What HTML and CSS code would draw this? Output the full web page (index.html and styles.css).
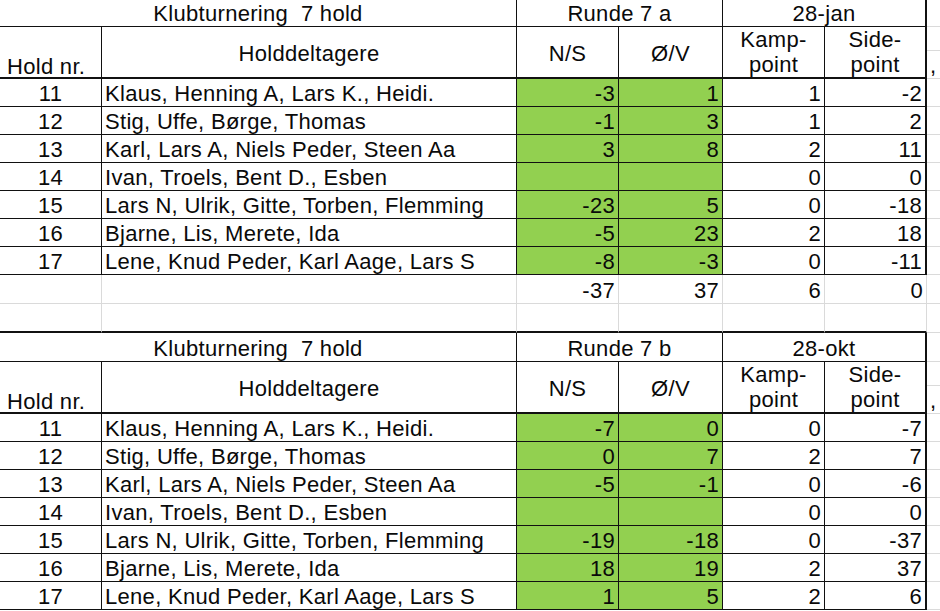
FILE: index.html
```html
<!DOCTYPE html>
<html lang="da">
<head>
<meta charset="utf-8">
<title>Klubturnering 7 hold</title>
<link rel="stylesheet" href="styles.css">
</head>
<body>
<div class="sheet">
  <!-- Table 1 -->
  <div class="row title top">
    <div class="c ctr span2">Klubturnering  7 hold</div>
    <div class="c ctr span2">Runde 7 a</div>
    <div class="c ctr span2 edge">28-jan</div>
    <div class="c out"></div>
  </div>
  <div class="row head">
    <div class="c hold">Hold nr.</div>
    <div class="c ctr mid">Holddeltagere</div>
    <div class="c ctr mid">N/S</div>
    <div class="c ctr mid">Ø/V</div>
    <div class="c ctr"><span class="two">Kamp-<br>point</span></div>
    <div class="c ctr edge"><span class="two">Side-<br>point</span></div>
    <div class="c out split">,</div>
  </div>
  <div class="row"><div class="c ctr">11</div><div class="c name">Klaus, Henning A, Lars K., Heidi.</div><div class="c num g">-3</div><div class="c num g">1</div><div class="c num">1</div><div class="c num edge">-2</div><div class="c out"></div></div>
  <div class="row"><div class="c ctr">12</div><div class="c name">Stig, Uffe, Børge, Thomas</div><div class="c num g">-1</div><div class="c num g">3</div><div class="c num">1</div><div class="c num edge">2</div><div class="c out"></div></div>
  <div class="row"><div class="c ctr">13</div><div class="c name">Karl, Lars A, Niels Peder, Steen Aa</div><div class="c num g">3</div><div class="c num g">8</div><div class="c num">2</div><div class="c num edge">11</div><div class="c out"></div></div>
  <div class="row"><div class="c ctr">14</div><div class="c name">Ivan, Troels, Bent D., Esben</div><div class="c num g"></div><div class="c num g"></div><div class="c num">0</div><div class="c num edge">0</div><div class="c out"></div></div>
  <div class="row"><div class="c ctr">15</div><div class="c name">Lars N, Ulrik, Gitte, Torben, Flemming</div><div class="c num g">-23</div><div class="c num g">5</div><div class="c num">0</div><div class="c num edge">-18</div><div class="c out"></div></div>
  <div class="row"><div class="c ctr">16</div><div class="c name">Bjarne, Lis, Merete, Ida</div><div class="c num g">-5</div><div class="c num g">23</div><div class="c num">2</div><div class="c num edge">18</div><div class="c out"></div></div>
  <div class="row"><div class="c ctr">17</div><div class="c name">Lene, Knud Peder, Karl Aage, Lars S</div><div class="c num g">-8</div><div class="c num g">-3</div><div class="c num">0</div><div class="c num edge">-11</div><div class="c out"></div></div>
  <div class="row soft sum"><div class="c"></div><div class="c"></div><div class="c num">-37</div><div class="c num">37</div><div class="c num">6</div><div class="c num">0</div><div class="c out"></div></div>
  <div class="row soft gap"><div class="c"></div><div class="c"></div><div class="c"></div><div class="c"></div><div class="c"></div><div class="c"></div><div class="c out"></div></div>

  <!-- Table 2 -->
  <div class="row title second">
    <div class="c ctr span2">Klubturnering  7 hold</div>
    <div class="c ctr span2">Runde 7 b</div>
    <div class="c ctr span2 edge">28-okt</div>
    <div class="c out"></div>
  </div>
  <div class="row head">
    <div class="c hold">Hold nr.</div>
    <div class="c ctr mid">Holddeltagere</div>
    <div class="c ctr mid">N/S</div>
    <div class="c ctr mid">Ø/V</div>
    <div class="c ctr"><span class="two">Kamp-<br>point</span></div>
    <div class="c ctr edge"><span class="two">Side-<br>point</span></div>
    <div class="c out split">,</div>
  </div>
  <div class="row"><div class="c ctr">11</div><div class="c name">Klaus, Henning A, Lars K., Heidi.</div><div class="c num g">-7</div><div class="c num g">0</div><div class="c num">0</div><div class="c num edge">-7</div><div class="c out"></div></div>
  <div class="row"><div class="c ctr">12</div><div class="c name">Stig, Uffe, Børge, Thomas</div><div class="c num g">0</div><div class="c num g">7</div><div class="c num">2</div><div class="c num edge">7</div><div class="c out"></div></div>
  <div class="row"><div class="c ctr">13</div><div class="c name">Karl, Lars A, Niels Peder, Steen Aa</div><div class="c num g">-5</div><div class="c num g">-1</div><div class="c num">0</div><div class="c num edge">-6</div><div class="c out"></div></div>
  <div class="row"><div class="c ctr">14</div><div class="c name">Ivan, Troels, Bent D., Esben</div><div class="c num g"></div><div class="c num g"></div><div class="c num">0</div><div class="c num edge">0</div><div class="c out"></div></div>
  <div class="row"><div class="c ctr">15</div><div class="c name">Lars N, Ulrik, Gitte, Torben, Flemming</div><div class="c num g">-19</div><div class="c num g">-18</div><div class="c num">0</div><div class="c num edge">-37</div><div class="c out"></div></div>
  <div class="row"><div class="c ctr">16</div><div class="c name">Bjarne, Lis, Merete, Ida</div><div class="c num g">18</div><div class="c num g">19</div><div class="c num">2</div><div class="c num edge">37</div><div class="c out"></div></div>
  <div class="row"><div class="c ctr">17</div><div class="c name">Lene, Knud Peder, Karl Aage, Lars S</div><div class="c num g">1</div><div class="c num g">5</div><div class="c num">2</div><div class="c num edge">6</div><div class="c out"></div></div>
</div>
</body>
</html>
```

FILE: styles.css
```css
html, body {
  margin: 0;
  padding: 0;
  background: #ffffff;
}

body {
  width: 940px;
  height: 611px;
  overflow: hidden;
  font-family: "Liberation Sans", Arial, sans-serif;
  font-size: 22px;
  letter-spacing: 0.3px;
  color: #0a0a0a;
}

.sheet {
  display: flex;
  flex-direction: column;
  width: 940px;
}

.row {
  display: grid;
  grid-template-columns: 102px 415px 102px 104px 102px 102px 13px;
  height: 28px;
}

.row.title.top { height: 27px; }
.row.title.second { height: 29px; }
.row.head { height: 52px; }
.row.sum { height: 29px; }
.row.gap { height: 29px; }

.c {
  box-sizing: border-box;
  display: flex;
  align-items: flex-end;
  line-height: 24px;
  padding: 0 3px;
  border-right: 1px solid #111111;
  border-bottom: 1px solid #111111;
  white-space: pre;
  overflow: hidden;
  min-width: 0;
}

.span2 { grid-column: span 2; }

.ctr { justify-content: center; text-align: center; }
.num { justify-content: flex-end; }
.name { justify-content: flex-start; }

.g { background: #92d050; }

.edge { border-right: 2px solid #111111; }

.out {
  border-right: none;
  border-bottom: 1px solid #dadada;
  padding: 0 0 0 3px;
}

/* header row */
.head .c { border-bottom-width: 2px; }
.head .out {
  border-bottom-width: 1px;
  background: linear-gradient(to bottom, transparent 23px, #dadada 23px, #dadada 24px, transparent 24px);
}
.head .hold {
  justify-content: flex-start;
  padding-left: 7px;
  line-height: 20px;
}
.head .mid { padding-bottom: 11px; }
.two {
  display: block;
  line-height: 25px;
  text-align: center;
}

/* rows outside the bordered tables */
.soft .c {
  border-right-color: #dadada;
  border-bottom-color: #dadada;
}
.gap .c { border-bottom: 2px solid #111111; }
.gap .out { border-bottom: 1px solid #dadada; }
```
